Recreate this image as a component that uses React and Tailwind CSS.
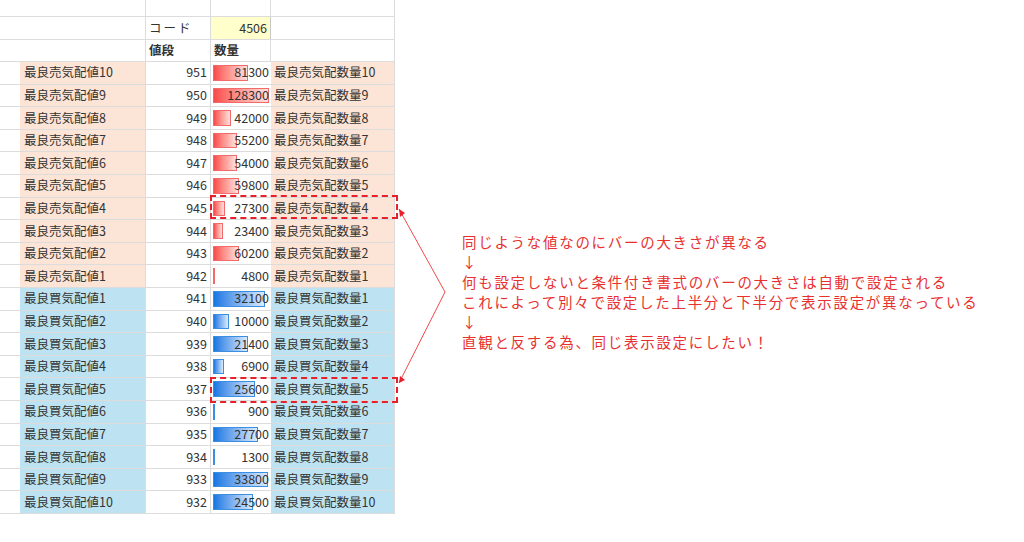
const sell = [
  [10, 951, 81300], [9, 950, 128300], [8, 949, 42000], [7, 948, 55200], [6, 947, 54000],
  [5, 946, 59800], [4, 945, 27300], [3, 944, 23400], [2, 943, 60200], [1, 942, 4800],
];
const buy = [
  [1, 941, 32100], [2, 940, 10000], [3, 939, 21400], [4, 938, 6900], [5, 937, 25600],
  [6, 936, 900], [7, 935, 27700], [8, 934, 1300], [9, 933, 33800], [10, 932, 24500],
];

const Row = ({ label, price, qty, label2, bg, bar, w }) => (
  <div className="flex h-[22.6px] border-b border-[#dcdcdc]">
    <div className="w-[20px]" />
    <div className={`w-[126px] ${bg} border-r border-[#dcdcdc] pl-1 flex items-center`}>{label}</div>
    <div className="w-[65px] border-r border-[#dcdcdc] pr-[3px] flex items-center justify-end">{price}</div>
    <div className="w-[60px] relative flex items-center justify-end pr-[2px]">
      <div
        className={`absolute left-[2px] top-[3px] bottom-[3px] border ${bar}`}
        style={{ width: w }}
      />
      <span className="relative">{qty}</span>
    </div>
    <div className={`w-[124px] ${bg} border-r border-[#dcdcdc] pl-[3px] flex items-center`}>{label2}</div>
  </div>
);

export default function App() {
  const font = { fontFamily: '"Noto Sans CJK JP", "Liberation Sans", sans-serif' };
  return (
    <div className="relative w-[1024px] h-[542px] bg-white text-[12.5px] text-[#333]" style={font}>
      <div className="absolute left-0 top-0">
        <div className="flex h-[17px] border-b border-[#dcdcdc]">
          <div className="w-[146px] border-r border-[#dcdcdc]" />
          <div className="w-[65px] border-r border-[#dcdcdc]" />
          <div className="w-[60px] border-r border-[#dcdcdc]" />
          <div className="w-[124px] border-r border-[#dcdcdc]" />
        </div>
        <div className="flex h-[23px] border-b border-[#dcdcdc]">
          <div className="w-[146px] border-r border-[#dcdcdc]" />
          <div className="w-[65px] border-r border-[#dcdcdc] pl-[3px] flex items-center tracking-[2px]">コード</div>
          <div className="w-[60px] bg-[#ffffcc] border-r border-[#c8c8c8] pr-[3px] flex items-center justify-end">4506</div>
          <div className="w-[124px] border-r border-[#dcdcdc]" />
        </div>
        <div className="flex h-[22px] border-b border-[#dcdcdc] font-bold">
          <div className="w-[146px] border-r border-[#dcdcdc]" />
          <div className="w-[65px] border-r border-[#dcdcdc] pl-[3px] flex items-center">値段</div>
          <div className="w-[60px] border-r border-[#dcdcdc] pl-[3px] flex items-center">数量</div>
          <div className="w-[124px] border-r border-[#dcdcdc]" />
        </div>
        {sell.map(([n, p, q]) => (
          <Row key={"s" + n} label={`最良売気配値${n}`} price={p} qty={q} label2={`最良売気配数量${n}`}
            bg="bg-[#fce4d6]" bar="border-[#f26b6b] bg-gradient-to-r from-[#f8484b] to-[#fde0e0]"
            w={Math.max(2, (q / 128300) * 56)} />
        ))}
        {buy.map(([n, p, q]) => (
          <Row key={"b" + n} label={`最良買気配値${n}`} price={p} qty={q} label2={`最良買気配数量${n}`}
            bg="bg-[#bde3f3]" bar="border-[#3b8fe0] bg-gradient-to-r from-[#1177e2] to-[#dbeafa]"
            w={Math.max(2, (q / 33800) * 55)} />
        ))}
      </div>

      <div className="absolute left-[210px] top-[195px] w-[188px] h-[24px] border-2 border-dashed border-[#e8202a]" />
      <div className="absolute left-[210px] top-[377px] w-[188px] h-[26px] border-2 border-dashed border-[#e8202a]" />
      <svg className="absolute left-0 top-0" width="1024" height="542">
        <polyline points="399,209 445,292 399,383" fill="none" stroke="#f04a4a" strokeWidth="1" />
        <polygon points="399,209 400,217 405,213" fill="#e8202a" />
        <polygon points="399,383 405,380 400,376" fill="#e8202a" />
      </svg>

      <div className="absolute left-[462px] top-[232px] text-[14.5px] leading-[20px] tracking-[1.7px] text-[#e8312f]">
        <div>同じような値なのにバーの大きさが異なる</div>
        <div>↓</div>
        <div>何も設定しないと条件付き書式のバーの大きさは自動で設定される</div>
        <div>これによって別々で設定した上半分と下半分で表示設定が異なっている</div>
        <div>↓</div>
        <div>直観と反する為、同じ表示設定にしたい！</div>
      </div>
    </div>
  );
}
